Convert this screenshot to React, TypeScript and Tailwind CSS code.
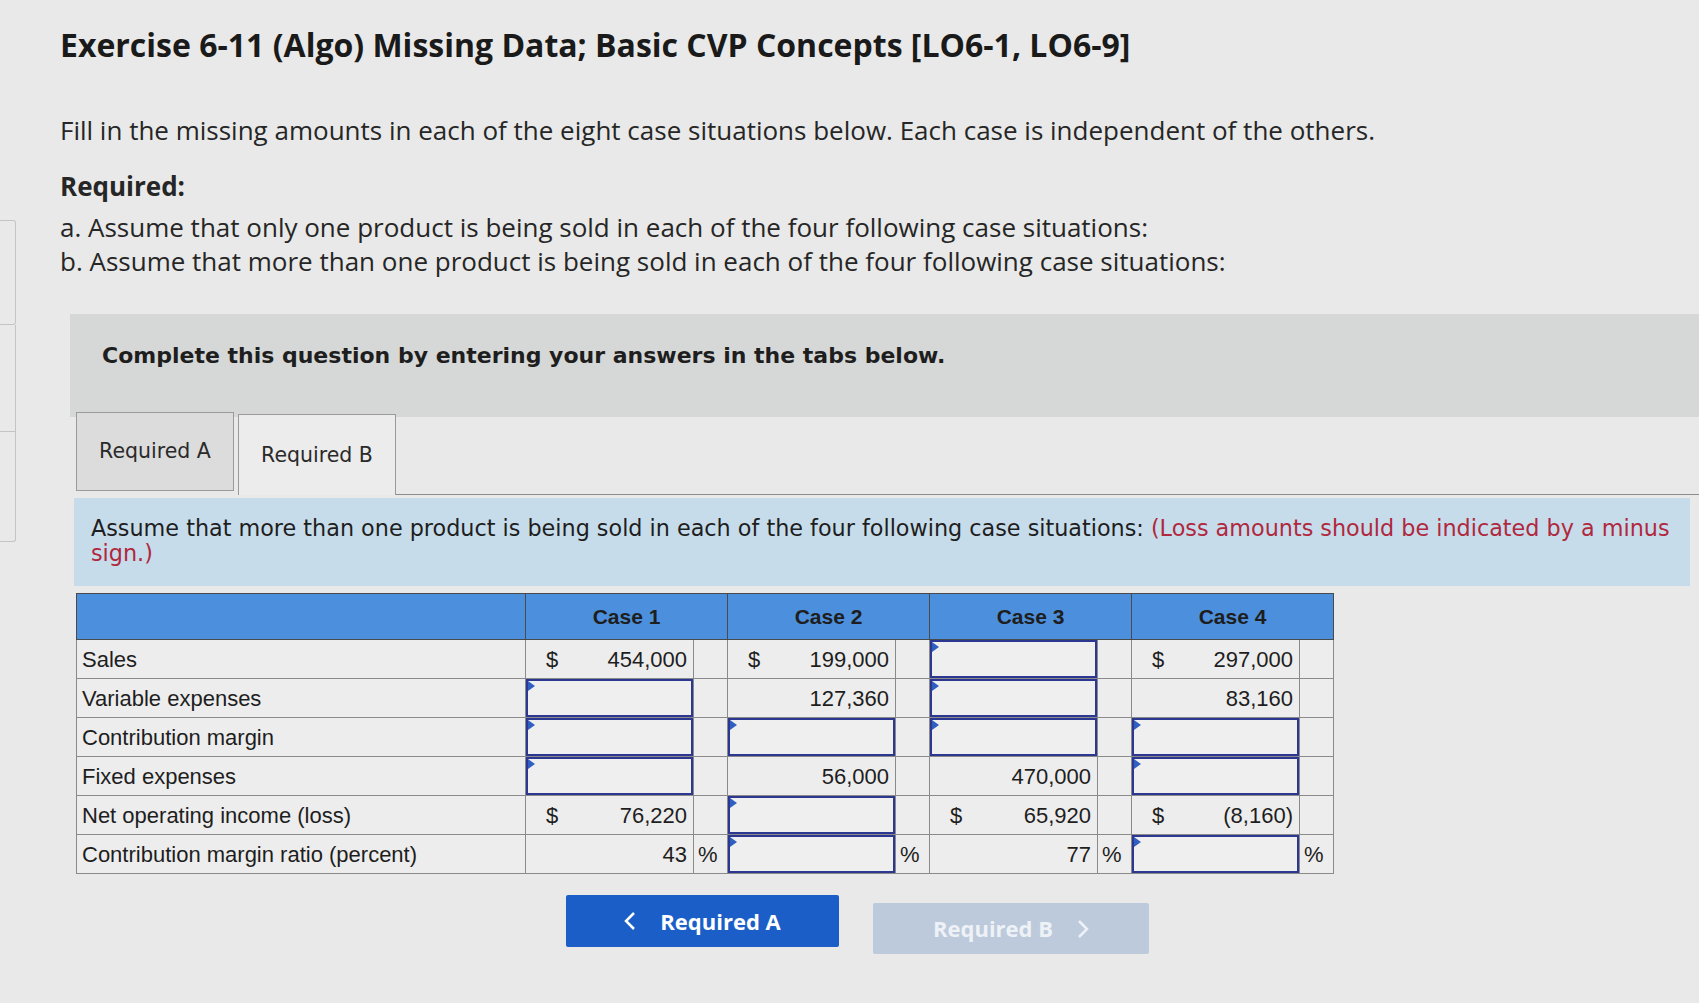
import React from "react";

type Cell =
  | { kind: "input"; pct?: boolean }
  | { kind: "value"; text: string; dollar?: boolean; pct?: boolean };

const rows: { label: string; cells: Cell[] }[] = [
  {
    label: "Sales",
    cells: [
      { kind: "value", text: "454,000", dollar: true },
      { kind: "value", text: "199,000", dollar: true },
      { kind: "input" },
      { kind: "value", text: "297,000", dollar: true },
    ],
  },
  {
    label: "Variable expenses",
    cells: [
      { kind: "input" },
      { kind: "value", text: "127,360" },
      { kind: "input" },
      { kind: "value", text: "83,160" },
    ],
  },
  {
    label: "Contribution margin",
    cells: [{ kind: "input" }, { kind: "input" }, { kind: "input" }, { kind: "input" }],
  },
  {
    label: "Fixed expenses",
    cells: [
      { kind: "input" },
      { kind: "value", text: "56,000" },
      { kind: "value", text: "470,000" },
      { kind: "input" },
    ],
  },
  {
    label: "Net operating income (loss)",
    cells: [
      { kind: "value", text: "76,220", dollar: true },
      { kind: "input" },
      { kind: "value", text: "65,920", dollar: true },
      { kind: "value", text: "(8,160)", dollar: true },
    ],
  },
  {
    label: "Contribution margin ratio (percent)",
    cells: [
      { kind: "value", text: "43", pct: true },
      { kind: "input", pct: true },
      { kind: "value", text: "77", pct: true },
      { kind: "input", pct: true },
    ],
  },
];

function InputBox() {
  return (
    <div className="relative h-full w-full border-2 border-[#2b3790] bg-[#efefef]">
      <span className="absolute left-0 top-0 h-0 w-0 border-y-[5px] border-l-[7px] border-y-transparent border-l-[#2f5fc0]" />
    </div>
  );
}

function CaseCells({ cell }: { cell: Cell }) {
  return (
    <>
      <td className="h-[39px] border border-[#8a8a8a] p-0">
        {cell.kind === "input" ? (
          <InputBox />
        ) : (
          <div className="flex h-full items-center justify-between px-[6px]">
            <span className="pl-[14px]">{cell.dollar ? "$" : ""}</span>
            <span>{cell.text}</span>
          </div>
        )}
      </td>
      <td className="h-[39px] border border-[#8a8a8a] px-[4px] text-left">{cell.pct ? "%" : ""}</td>
    </>
  );
}

export default function App() {
  return (
    <div className="flex min-h-[1003px] w-full bg-[#e8e9e8] font-['Open_Sans',sans-serif] text-[#1c1c1c]">
      {/* left rail */}
      <div className="flex w-[16px] flex-col pt-[220px]">
        <div className="h-[105px] rounded-r-[3px] border border-l-0 border-[#c4c4c4]" />
        <div className="h-[107px] border border-l-0 border-t-0 border-[#c4c4c4]" />
        <div className="h-[110px] rounded-br-[3px] border border-l-0 border-t-0 border-[#c4c4c4]" />
      </div>

      <div className="flex flex-1 flex-col pl-[44px]">
        <h1 className="mt-[27px] text-[32px] font-bold leading-[36px] text-[#1a1a1a]">
          Exercise 6-11 (Algo) Missing Data; Basic CVP Concepts [LO6-1, LO6-9]
        </h1>
        <p className="mt-[52px] text-[26px] leading-[30px] text-[#262626]">
          Fill in the missing amounts in each of the eight case situations below. Each case is
          independent of the others.
        </p>
        <div className="mt-[24px] text-[26px] leading-[34px] text-[#262626]">
          <div className="mb-[7px] font-bold">Required:</div>
          <div>a. Assume that only one product is being sold in each of the four following case situations:</div>
          <div>b. Assume that more than one product is being sold in each of the four following case situations:</div>
        </div>

        {/* question area */}
        <div className="ml-[10px] mt-[36px] flex flex-col font-['DejaVu_Sans',sans-serif]">
          <div className="flex h-[103px] items-start bg-[#d6d7d7] pl-[32px] pt-[25px]">
            <span className="text-[22px] font-bold text-[#1e1e1e]">
              Complete this question by entering your answers in the tabs below.
            </span>
          </div>

          <div className="mt-[-5px] flex items-end pl-[6px]">
            <div className="mb-[4px] flex h-[79px] w-[158px] items-center justify-center border border-[#9a9a9a] bg-[#dcdcdc] text-[20.5px] text-[#2a2a2a]">
              Required A
            </div>
            <div className="ml-[4px] flex h-[81px] w-[158px] items-center justify-center border border-b-0 border-[#9a9a9a] bg-[#ececec] text-[20.5px] text-[#2a2a2a]">
              Required B
            </div>
            <div className="h-px flex-1 bg-[#8c8c8c]" />
          </div>

          <div className="ml-[4px] mr-[9px] mt-[3px] bg-[#c7dcea] pb-[20px] pl-[17px] pr-[4px] pt-[18px] text-[22.3px] leading-[25px] text-[#1e1e1e]">
            Assume that more than one product is being sold in each of the four following case
            situations: <span className="text-[#b0283e]">(Loss amounts should be indicated by a minus</span>
            <br />
            <span className="text-[#b0283e]">sign.)</span>
          </div>

          <table className="ml-[6px] mt-[7px] w-[1257px] table-fixed border-collapse font-['Liberation_Sans',sans-serif] text-[22px] text-[#1e1e1e]">
            <colgroup>
              <col className="w-[449px]" />
              <col className="w-[168px]" />
              <col className="w-[34px]" />
              <col className="w-[168px]" />
              <col className="w-[34px]" />
              <col className="w-[168px]" />
              <col className="w-[34px]" />
              <col className="w-[168px]" />
              <col className="w-[34px]" />
            </colgroup>
            <thead>
              <tr className="h-[46px] bg-[#4c8fdc]">
                <th className="border border-[#4a4a4a]" />
                {["Case 1", "Case 2", "Case 3", "Case 4"].map((c) => (
                  <th key={c} colSpan={2} className="border border-[#4a4a4a] text-center text-[21px] font-bold">
                    {c}
                  </th>
                ))}
              </tr>
            </thead>
            <tbody className="bg-[#ededed]">
              {rows.map((r) => (
                <tr key={r.label}>
                  <td className="h-[39px] border border-[#8a8a8a] pl-[5px]">{r.label}</td>
                  {r.cells.map((c, i) => (
                    <CaseCells key={i} cell={c} />
                  ))}
                </tr>
              ))}
            </tbody>
          </table>

          <div className="mt-[21px] flex items-start pl-[496px] font-['Open_Sans',sans-serif]">
            <button className="flex h-[52px] w-[273px] items-center justify-center gap-[24px] rounded-[2px] bg-[#1b5ec7] text-[22px] font-bold text-white">
              <svg width="12" height="20" viewBox="0 0 12 20" fill="none" stroke="currentColor" strokeWidth="2.5">
                <path d="M10 2 L2 10 L10 18" />
              </svg>
              Required A
            </button>
            <button className="ml-[34px] mt-[8px] flex h-[51px] w-[276px] items-center justify-center gap-[24px] rounded-[2px] bg-[#bccadb] text-[22px] font-bold text-[#eef2f7]">
              Required B
              <svg width="12" height="20" viewBox="0 0 12 20" fill="none" stroke="currentColor" strokeWidth="2.5">
                <path d="M2 2 L10 10 L2 18" />
              </svg>
            </button>
          </div>
        </div>
      </div>
    </div>
  );
}
